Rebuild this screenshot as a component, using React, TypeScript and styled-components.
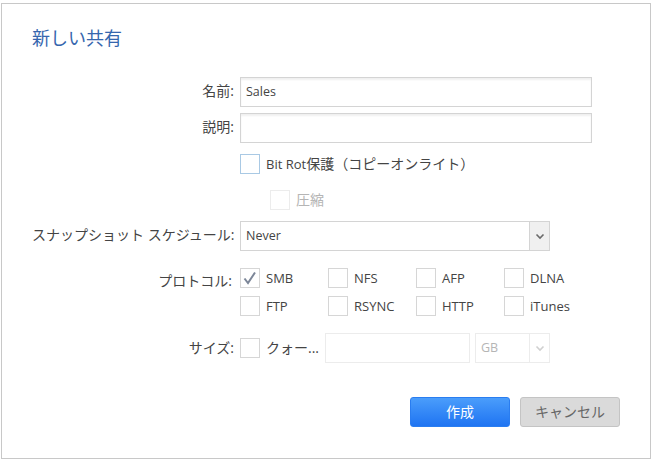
import React from "react";
import styled, { createGlobalStyle } from "styled-components";

const Global = createGlobalStyle`
  html, body { margin: 0; padding: 0; background: #ffffff; }
  body { width: 654px; height: 460px; overflow: hidden; font-family: "Open Sans", "Noto Sans CJK JP", sans-serif; }
`;

const Page = styled.div`
  width: 654px;
  height: 460px;
  padding: 3px 3px 1px 1px;
  box-sizing: border-box;
  background: #fff;
`;

const Dialog = styled.div`
  box-sizing: border-box;
  height: 100%;
  border: 1px solid #c8c8c8;
  background: #fff;
  padding: 21px 0 0 30px;
  display: flex;
  flex-direction: column;
`;

const Title = styled.h1`
  margin: 0;
  height: 25px;
  font: 400 18px/25px "Noto Sans CJK JP", sans-serif;
  color: #3566ae;
`;

const Form = styled.div`
  margin-top: 27px;
  display: flex;
  flex-direction: column;
`;

const Row = styled.div<{ $top?: number; $center?: boolean }>`
  display: flex;
  align-items: ${(p) => (p.$center ? "center" : "flex-start")};
  margin-top: ${(p) => p.$top ?? 0}px;
`;

const Label = styled.label<{ $line?: number; $inset?: number }>`
  box-sizing: border-box;
  width: 202px;
  margin-right: 6px;
  padding-right: ${(p) => p.$inset ?? 0}px;
  flex: none;
  text-align: right;
  white-space: nowrap;
  font: 400 14px/${(p) => p.$line ?? 28}px "Open Sans", "Noto Sans CJK JP", sans-serif;
  color: #444;
`;

const TextInput = styled.div<{ $width: number; $disabled?: boolean }>`
  box-sizing: border-box;
  width: ${(p) => p.$width}px;
  height: 30px;
  flex: none;
  border: 1px solid ${(p) => (p.$disabled ? "#ececec" : "#d4d4d4")};
  box-shadow: ${(p) => (p.$disabled ? "none" : "inset 0 2px 2px #f0f0f0")};
  background: #fff;
  padding-left: 5px;
  font: 400 12.5px/27px "Open Sans", "Noto Sans CJK JP", sans-serif;
  color: #444;
`;

const Select = styled.div<{ $width: number; $left?: number; $disabled?: boolean }>`
  box-sizing: border-box;
  width: ${(p) => p.$width}px;
  height: 30px;
  flex: none;
  display: flex;
  margin-left: ${(p) => p.$left ?? 0}px;
  border: 1px solid ${(p) => (p.$disabled ? "#ececec" : "#d4d4d4")};
  background: #fff;
  font: 400 12.5px/27px "Open Sans", "Noto Sans CJK JP", sans-serif;
  color: ${(p) => (p.$disabled ? "#b5b5b5" : "#444")};
`;

const SelectValue = styled.span`
  flex: 1;
  padding-left: 5px;
`;

const SelectArrow = styled.span<{ $disabled?: boolean }>`
  width: 19px;
  flex: none;
  display: flex;
  align-items: center;
  justify-content: center;
  border-left: 1px solid ${(p) => (p.$disabled ? "#ececec" : "#d4d4d4")};
  background: ${(p) => (p.$disabled ? "#fff" : "#f0f0f0")};
  color: ${(p) => (p.$disabled ? "#d0d0d0" : "#6a6a6a")};
`;

const Check = styled.label<{ $width?: number; $indent?: number; $disabled?: boolean }>`
  display: flex;
  align-items: center;
  gap: 6px;
  flex: none;
  width: ${(p) => (p.$width ? `${p.$width}px` : "auto")};
  margin-left: ${(p) => p.$indent ?? 0}px;
  height: 20px;
  white-space: nowrap;
  font: 400 13px/21px "Open Sans", "Noto Sans CJK JP", sans-serif;
  color: ${(p) => (p.$disabled ? "#b5b5b5" : "#444")};
`;

const Cjk = styled.span`
  font: 400 14px/20px "Open Sans", "Noto Sans CJK JP", sans-serif;
`;

const Box = styled.span<{ $focus?: boolean; $disabled?: boolean }>`
  box-sizing: border-box;
  width: 20px;
  height: 20px;
  flex: none;
  display: flex;
  align-items: center;
  justify-content: center;
  background: #fff;
  border: 1px solid ${(p) => (p.$focus ? "#a9c9e4" : p.$disabled ? "#ececec" : "#d6d6d6")};
  color: #7c8698;
`;

const Grid = styled.div`
  display: grid;
  grid-template-columns: repeat(4, 88px);
  grid-auto-rows: 20px;
  row-gap: 8px;
`;

const Footer = styled.div`
  margin-top: 34px;
  display: flex;
  gap: 10px;
  padding-left: 378px;
`;

const Button = styled.button<{ $primary?: boolean }>`
  box-sizing: border-box;
  width: 100px;
  height: 30px;
  border-radius: 3px;
  padding: 0 0 2px;
  font: 400 14px/26px "Noto Sans CJK JP", sans-serif;
  border: 1px solid ${(p) => (p.$primary ? "#2a7df0" : "#c4c4c4")};
  color: ${(p) => (p.$primary ? "#fff" : "#666")};
  background: ${(p) => (p.$primary ? "linear-gradient(#4a9dfb, #1f74f2)" : "#dadada")};
`;

const Chevron = () => (
  <svg width="10" height="7" viewBox="0 0 10 7" fill="none">
    <path d="M1.5 1.5 L5 5 L8.5 1.5" stroke="currentColor" strokeWidth="1.6" />
  </svg>
);

const Tick = () => (
  <svg width="14" height="14" viewBox="0 0 14 14" fill="none">
    <path d="M1.5 7.5 L5 12 L12 1.5" stroke="currentColor" strokeWidth="2" />
  </svg>
);

const protocols = ["SMB", "NFS", "AFP", "DLNA", "FTP", "RSYNC", "HTTP", "iTunes"];

export default function App() {
  return (
    <Page>
      <Global />
      <Dialog>
        <Title>新しい共有</Title>
        <Form>
          <Row>
            <Label>名前:</Label>
            <TextInput $width={352}>Sales</TextInput>
          </Row>
          <Row $top={6}>
            <Label>説明:</Label>
            <TextInput $width={352} />
          </Row>
          <Row $top={11}>
            <Label />
            <Check><Box $focus /><span>Bit Rot<Cjk>保護（コピーオンライト）</Cjk></span></Check>
          </Row>
          <Row $top={16}>
            <Label />
            <Check $indent={30} $disabled><Box $disabled /><Cjk>圧縮</Cjk></Check>
          </Row>
          <Row $top={11}>
            <Label>スナップショット スケジュール:</Label>
            <Select $width={310}>
              <SelectValue>Never</SelectValue>
              <SelectArrow><Chevron /></SelectArrow>
            </Select>
          </Row>
          <Row $top={17}>
            <Label $line={25} $inset={2}>プロトコル:</Label>
            <Grid>
              {protocols.map((name) => (
                <Check key={name}>
                  <Box>{name === "SMB" && <Tick />}</Box>
                  {name}
                </Check>
              ))}
            </Grid>
          </Row>
          <Row $top={17} $center>
            <Label>サイズ:</Label>
            <Check $width={85}><Box /><Cjk>クォー...</Cjk></Check>
            <TextInput $width={145} $disabled />
            <Select $width={75} $left={5} $disabled>
              <SelectValue>GB</SelectValue>
              <SelectArrow $disabled><Chevron /></SelectArrow>
            </Select>
          </Row>
        </Form>
        <Footer>
          <Button $primary>作成</Button>
          <Button>キャンセル</Button>
        </Footer>
      </Dialog>
    </Page>
  );
}
